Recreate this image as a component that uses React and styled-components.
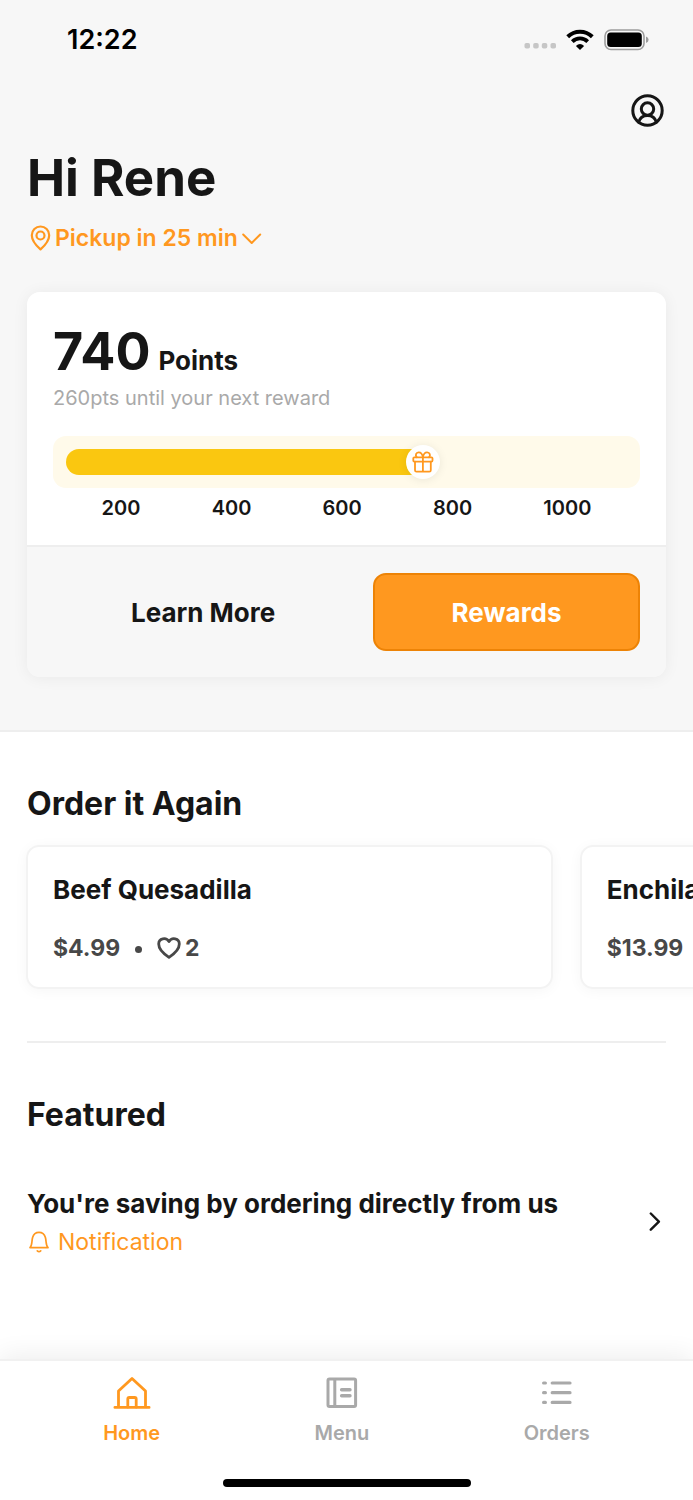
import styled, { createGlobalStyle } from "styled-components";

const GlobalStyle = createGlobalStyle`
  :root {
    --color-accent: #ff981f;
    --color-dark: #161616;
    --color-muted: #a9a9a9;
    --color-line: #eeeeee;
    --color-panel: #f7f7f7;
  }

  * {
    box-sizing: border-box;
  }

  body {
    background: white;
    color: var(--color-dark);
    font-family: Inter, "Liberation Sans", sans-serif;
    margin: 0;
  }

  button {
    background: none;
    border: 0;
    color: inherit;
    cursor: pointer;
    font-family: inherit;
    padding: 0;
  }

  h1,
  h2,
  h3,
  p {
    margin: 0;
  }

  svg {
    display: block;
    flex: none;
  }
`;

const Page = styled.div`
  display: flex;
  flex-direction: column;
  min-height: 100vh;
`;

const Hero = styled.header`
  background: var(--color-panel);
  border-bottom: 2px solid var(--color-line);
  padding: 0 27px 53px;
`;

const StatusBar = styled.div`
  align-items: center;
  color: black;
  display: flex;
  font-size: 27px;
  font-weight: 600;
  height: 80px;
  justify-content: space-between;
  line-height: 36px;
  padding: 0 17px 0 40px;
`;

const StatusIcons = styled.div`
  align-items: center;
  display: flex;
  gap: 10px;
`;

const TopActions = styled.div`
  display: flex;
  height: 65px;
  justify-content: flex-end;
  padding: 14px 2px 0 0;
`;

const ProfileButton = styled.button`
  align-self: flex-start;
`;

const Greeting = styled.h1`
  font-size: 51px;
  font-weight: 700;
  line-height: 66px;
`;

const PickupButton = styled.button`
  align-items: center;
  color: var(--color-accent);
  display: flex;
  font-size: 23px;
  font-weight: 600;
  gap: 4px;
  line-height: 32px;
  margin: 11px 0 38px;
  padding-left: 3px;
`;

const PointsCard = styled.section`
  border-radius: 13px;
  box-shadow: 0 1px 16px rgba(0, 0, 0, 0.06);
  overflow: hidden;
`;

const PointsBody = styled.div`
  background: white;
  padding: 27px 26px 24px;
`;

const Points = styled.p`
  align-items: baseline;
  display: flex;
  font-size: 26px;
  font-weight: 700;
  gap: 8px;
  line-height: 1;

  strong {
    font-size: 52px;
    font-weight: 700;
    line-height: 66px;
  }
`;

const PointsHint = styled.p`
  color: var(--color-muted);
  font-size: 20px;
  line-height: 26px;
`;

const Track = styled.div`
  background: #fffaea;
  border-radius: 13px;
  margin-top: 25px;
  padding: 13px;
`;

const Fill = styled.div`
  background: #fac710;
  border-radius: 13px;
  height: 26px;
  position: relative;
`;

const Knob = styled.span`
  align-items: center;
  background: white;
  border-radius: 50%;
  box-shadow: 0 1px 10px rgba(0, 0, 0, 0.08);
  color: var(--color-accent);
  display: flex;
  height: 34px;
  justify-content: center;
  position: absolute;
  right: -17px;
  top: -4px;
  width: 34px;
`;

const Scale = styled.div`
  display: flex;
  font-size: 20px;
  font-weight: 600;
  justify-content: space-around;
  line-height: 26px;
  padding: 7px 13px 0;
`;

const PointsActions = styled.div`
  background: var(--color-panel);
  border-top: 2px solid var(--color-line);
  display: grid;
  gap: 20px;
  grid-template-columns: 9fr 8fr;
  padding: 26px;
`;

const ActionButton = styled.button`
  background: ${({ $primary }) => ($primary ? "var(--color-accent)" : "none")};
  border: ${({ $primary }) => ($primary ? "2px solid #ed8306" : "0")};
  border-radius: 13px;
  color: ${({ $primary }) => ($primary ? "white" : "var(--color-dark)")};
  font-size: 26px;
  font-weight: 700;
  height: 78px;
`;

const Content = styled.main`
  flex: 1;
`;

const SectionTitle = styled.h2`
  font-size: 32px;
  font-weight: 700;
  line-height: 42px;
  padding: 0 27px;
`;

const OrderAgain = styled.section`
  padding-top: 51px;
`;

const Dishes = styled.div`
  display: flex;
  gap: 27px;
  overflow-x: auto;
  padding: 20px 26px 52px;
  scrollbar-width: none;
`;

const Dish = styled.article`
  border: 2px solid #f3f3f3;
  border-radius: 13px;
  box-shadow: 0 2px 14px rgba(0, 0, 0, 0.04);
  flex: 0 0 76vw;
  padding: 26px 25px 24px;

  h3 {
    font-size: 26px;
    font-weight: 700;
    line-height: 34px;
  }
`;

const DishMeta = styled.p`
  align-items: center;
  color: #484848;
  display: flex;
  font-size: 23px;
  font-weight: 700;
  line-height: 30px;
  margin-top: 26px;
`;

const Dot = styled.span`
  background: currentColor;
  border-radius: 50%;
  height: 7px;
  margin: 3px 15px 0;
  width: 7px;
`;

const Likes = styled.span`
  align-items: center;
  display: flex;
  gap: 4px;
`;

const Divider = styled.hr`
  border: 0;
  border-top: 2px solid var(--color-line);
  margin: 0 27px;
`;

const Featured = styled.section`
  padding: 51px 0 60px;
`;

const FeaturedLink = styled.a`
  align-items: center;
  color: inherit;
  display: flex;
  justify-content: space-between;
  padding: 51px 32px 0 27px;
  text-decoration: none;

  h3 {
    font-size: 26px;
    font-weight: 700;
    line-height: 34px;
  }
`;

const Tag = styled.p`
  align-items: center;
  color: var(--color-accent);
  display: flex;
  font-size: 23px;
  gap: 9px;
  line-height: 30px;
  margin-top: 6px;
  padding-left: 2px;
`;

const TabBar = styled.footer`
  background: white;
  border-top: 2px solid #f1f1f1;
  bottom: 0;
  box-shadow: 0 -4px 24px rgba(0, 0, 0, 0.07);
  padding-bottom: 13px;
  position: sticky;
`;

const Tabs = styled.nav`
  display: flex;
  height: 118px;
  justify-content: space-around;
  padding: 13px 26px 0;
`;

const Tab = styled.a`
  align-items: center;
  color: ${({ $active }) =>
    $active ? "var(--color-accent)" : "var(--color-muted)"};
  display: flex;
  flex-direction: column;
  font-size: 20px;
  font-weight: 600;
  gap: 8px;
  line-height: 26px;
  text-decoration: none;
`;

const HomeIndicator = styled.div`
  background: black;
  border-radius: 4px;
  height: 8px;
  margin: 0 auto;
  width: 248px;
`;

const Icon = ({ width, height = width, stroke = 2, children }) => (
  <svg
    width={width}
    height={height}
    viewBox={`0 0 ${width} ${height}`}
    fill="none"
    stroke="currentColor"
    strokeWidth={stroke}
    strokeLinecap="round"
    strokeLinejoin="round"
    aria-hidden="true"
  >
    {children}
  </svg>
);

const SignalIcon = () => (
  <svg width="32" height="20" viewBox="0 0 32 20" fill="#c6c6c6">
    <rect x="0.5" y="13" width="5.5" height="5.5" rx="1.8" />
    <rect x="9.2" y="13" width="5.5" height="5.5" rx="1.8" />
    <rect x="17.8" y="13" width="5.5" height="5.5" rx="1.8" />
    <rect x="26.5" y="13" width="5.5" height="5.5" rx="1.8" />
  </svg>
);

const WifiIcon = () => (
  <svg width="28" height="22" viewBox="0 0 28 22" fill="none" stroke="black">
    <path d="M1.7 7.8A17.6 17.6 0 0 1 26.3 7.8" strokeWidth="4" />
    <path d="M6.3 12.6A11 11 0 0 1 21.7 12.6" strokeWidth="3.8" />
    <path
      d="M14 21L9.9 17Q14 13.2 18.1 17Z"
      fill="black"
      stroke="none"
    />
  </svg>
);

const BatteryIcon = () => (
  <svg width="45" height="22" viewBox="0 0 45 22" fill="none">
    <rect x="1" y="1" width="39" height="19.5" rx="6" stroke="#9d9d9d" strokeWidth="1.6" />
    <rect x="3.2" y="3.4" width="34.6" height="14.7" rx="3.5" fill="black" />
    <path d="M42 7.5Q44.6 8.5 44.6 10.8T42 14Z" fill="#9d9d9d" />
  </svg>
);

const ProfileIcon = () => (
  <Icon width={33} stroke={3}>
    <circle cx="16.5" cy="16.5" r="14.7" />
    <circle cx="16.5" cy="15" r="6.2" />
    <path d="M7.6 28.2C8.8 23.8 12 21.4 16.5 21.4S24.2 23.8 25.4 28.2" />
  </Icon>
);

const PinIcon = () => (
  <Icon width={21} height={26} stroke={2.2}>
    <path d="M10.5 24.4C7.8 22 1.8 16.7 1.8 10.2A8.7 8.7 0 0 1 19.2 10.2C19.2 16.7 13.2 22 10.5 24.4Z" />
    <circle cx="10.5" cy="10.5" r="4" />
  </Icon>
);

const DownIcon = () => (
  <Icon width={20} height={12}>
    <path d="M1.2 2.5L9.7 11L18.2 2.5" />
  </Icon>
);

const GiftIcon = () => (
  <Icon width={22} stroke={1.8}>
    <rect x="1.3" y="6.3" width="19.2" height="4.3" rx="1" />
    <path d="M3 10.6V19.2Q3 20.7 4.5 20.7H17.3Q18.8 20.7 18.8 19.2V10.6M10.9 6.3V20.7" />
    <path d="M10.9 6.2C10.3 2.8 8.7 1.2 6.6 1.3C4 1.5 3 4.2 4.7 6.2M10.9 6.2C11.5 2.8 13.1 1.2 15.2 1.3C17.8 1.5 18.8 4.2 17.1 6.2" />
  </Icon>
);

const HeartIcon = () => (
  <Icon width={24} height={22} stroke={2.8}>
    <path d="M12 20.3C8.5 18 1.7 12.7 1.7 7C1.7 1.2 9.2-.1 12 4.6C14.8-.1 22.3 1.2 22.3 7C22.3 12.7 15.5 18 12 20.3Z" />
  </Icon>
);

const BellIcon = () => (
  <Icon width={20} height={22} stroke={1.7}>
    <path d="M1 16.6C3.4 14.5 2.5 10.4 3.6 6.5C4.6 3 7 1.4 10 1.4S15.4 3 16.4 6.5C17.5 10.4 16.6 14.5 19 16.6Z" />
    <path d="M8.3 19.8Q10 21.4 11.7 19.8" />
  </Icon>
);

const RightIcon = () => (
  <Icon width={12} height={20} stroke={2.4}>
    <path d="M1.8 1.5L9.9 9.6L1.8 17.7" />
  </Icon>
);

const HomeIcon = () => (
  <Icon width={38} height={38} stroke={2.8}>
    <path d="M1.9 33.4H36.1M5.5 33.4V17L19 4.4L32.5 17V33.4" />
    <path d="M14.8 33V25Q14.8 23.5 16.3 23.5H21.7Q23.2 23.5 23.2 25V33" />
  </Icon>
);

const MenuIcon = () => (
  <Icon width={38} height={38} stroke={3}>
    <rect x="5" y="5" width="27.6" height="27.4" rx="1.5" />
    <path d="M11.8 5.5V32.2" />
    <path d="M18.6 15.7H27M18.6 21.7H27" strokeWidth="3.4" />
  </Icon>
);

const OrdersIcon = () => (
  <Icon width={38} height={38} stroke={3.2}>
    <path d="M5.6 9H7.4M14.2 9H32M5.6 18.7H7.4M14.2 18.7H32M5.6 28.4H7.4M14.2 28.4H32" />
  </Icon>
);

const POINTS = 740;
const NEXT_REWARD = 1000;
const STEPS = [200, 400, 600, 800, 1000];

// the last step label sits before the end of the track
const progress = (POINTS / NEXT_REWARD) * 86;

const DISHES = [
  { name: "Beef Quesadilla", price: "$4.99", likes: 2 },
  { name: "Enchiladas", price: "$13.99", likes: 1 },
];

const TABS = [
  { label: "Home", icon: HomeIcon, active: true },
  { label: "Menu", icon: MenuIcon },
  { label: "Orders", icon: OrdersIcon },
];

export default function App() {
  return (
    <Page>
      <GlobalStyle />
      <Hero>
        <StatusBar>
          <span>12:22</span>
          <StatusIcons>
            <SignalIcon />
            <WifiIcon />
            <BatteryIcon />
          </StatusIcons>
        </StatusBar>

        <TopActions>
          <ProfileButton aria-label="Profile">
            <ProfileIcon />
          </ProfileButton>
        </TopActions>

        <Greeting>Hi Rene</Greeting>
        <PickupButton>
          <PinIcon />
          Pickup in 25 min
          <DownIcon />
        </PickupButton>

        <PointsCard>
          <PointsBody>
            <Points>
              <strong>{POINTS}</strong> Points
            </Points>
            <PointsHint>
              {NEXT_REWARD - POINTS}pts until your next reward
            </PointsHint>
            <Track>
              <Fill style={{ width: `${progress}%` }}>
                <Knob>
                  <GiftIcon />
                </Knob>
              </Fill>
            </Track>
            <Scale>
              {STEPS.map((step) => (
                <span key={step}>{step}</span>
              ))}
            </Scale>
          </PointsBody>
          <PointsActions>
            <ActionButton>Learn More</ActionButton>
            <ActionButton $primary>Rewards</ActionButton>
          </PointsActions>
        </PointsCard>
      </Hero>

      <Content>
        <OrderAgain>
          <SectionTitle>Order it Again</SectionTitle>
          <Dishes>
            {DISHES.map(({ name, price, likes }) => (
              <Dish key={name}>
                <h3>{name}</h3>
                <DishMeta>
                  {price}
                  <Dot />
                  <Likes>
                    <HeartIcon />
                    {likes}
                  </Likes>
                </DishMeta>
              </Dish>
            ))}
          </Dishes>
        </OrderAgain>

        <Divider />

        <Featured>
          <SectionTitle>Featured</SectionTitle>
          <FeaturedLink href="#0">
            <div>
              <h3>You&apos;re saving by ordering directly from us</h3>
              <Tag>
                <BellIcon />
                Notification
              </Tag>
            </div>
            <RightIcon />
          </FeaturedLink>
        </Featured>
      </Content>

      <TabBar>
        <Tabs>
          {TABS.map(({ label, icon: TabIcon, active }) => (
            <Tab key={label} href="#0" $active={active}>
              <TabIcon />
              {label}
            </Tab>
          ))}
        </Tabs>
        <HomeIndicator />
      </TabBar>
    </Page>
  );
}
